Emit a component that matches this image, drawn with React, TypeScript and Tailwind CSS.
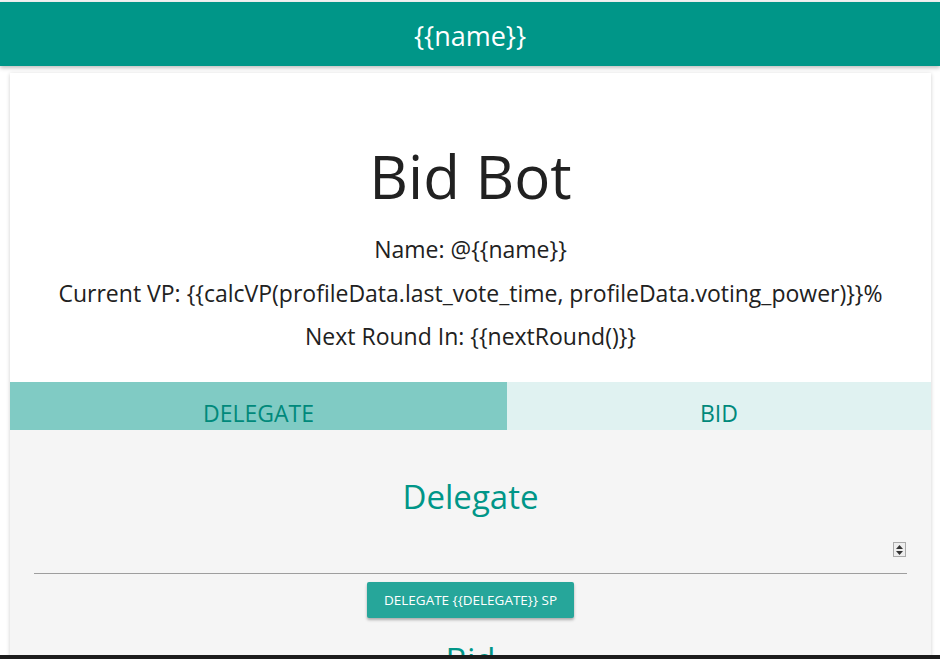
export default function App() {
  const font = { fontFamily: '"Open Sans", "Noto Sans", sans-serif' }
  return (
    <div className="h-[659px] overflow-hidden flex flex-col bg-white" style={font}>
      <div className="flex-1 overflow-hidden">
        <div className="h-[2px] bg-[#f3f3f3]" />
        <header className="h-16 pt-[4px] bg-[#009688] flex items-center justify-center shadow-[0_2px_4px_rgba(0,0,0,0.25)] relative z-10">
          <span className="text-white text-[27px]">{'{{name}}'}</span>
        </header>
        <main className="mx-[10px] mt-[7px] w-[921px] bg-white shadow-[0_1px_4px_rgba(0,0,0,0.2)]">
          <div className="flex flex-col items-center pt-[68px] pb-[25px] text-[#212121]">
            <h1 className="text-[60px] leading-[70px]">Bid Bot</h1>
            <p className="mt-[16px] text-[23px] leading-[44px]">Name: @{'{{name}}'}</p>
            <p className="text-[23px] leading-[44px]">
              Current VP: {'{{calcVP(profileData.last_vote_time, profileData.voting_power)}}'}%
            </p>
            <p className="text-[23px] leading-[42px]">Next Round In: {'{{nextRound()}}'}</p>
          </div>
          <div className="flex h-12">
            <div className="w-[497px] bg-[#80cbc4] flex justify-center pt-[16px]">
              <span className="text-[#00897b] text-[23px] leading-[30px]">DELEGATE</span>
            </div>
            <div className="flex-1 bg-[#e0f2f1] flex justify-center pt-[16px]">
              <span className="text-[#00897b] text-[23px] leading-[30px]">BID</span>
            </div>
          </div>
          <div className="bg-[#f5f5f5] px-6 pt-[45px] pb-10 flex flex-col items-center">
            <h2 className="text-[#009688] text-[33px] leading-[44px]">Delegate</h2>
            <div className="w-full mt-[18px] h-[37px] border-b border-[#9e9e9e] flex items-end justify-end pb-[16px] pr-[1px]">
              <div className="w-[13px] h-[15px] border border-[#aaa] bg-[#eee] flex flex-col items-center justify-center gap-[2px]">
                <svg width="7" height="4" viewBox="0 0 7 4"><path d="M3.5 0 L7 4 L0 4 Z" fill="#333" /></svg>
                <svg width="7" height="4" viewBox="0 0 7 4"><path d="M0 0 L7 0 L3.5 4 Z" fill="#333" /></svg>
              </div>
            </div>
            <button className="mt-[8px] h-9 px-[17px] bg-[#26a69a] text-white text-[13.5px] rounded-[2px] shadow-[0_2px_3px_rgba(0,0,0,0.3)]">
              DELEGATE {'{{DELEGATE}}'} SP
            </button>
            <h2 className="mt-[20px] text-[#009688] text-[33px] leading-[44px]">Bid</h2>
          </div>
        </main>
      </div>
      <div className="h-[4px] bg-[#1c1c1c]" />
    </div>
  )
}
